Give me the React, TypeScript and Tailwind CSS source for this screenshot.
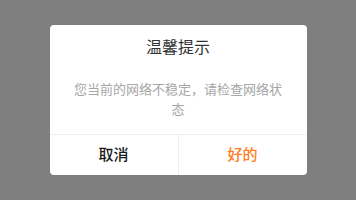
import React from 'react';

const App: React.FC = () => {
  return (
    <div
      className="w-[356px] h-[200px] bg-[#7f7f7f] flex items-center justify-center"
      style={{ fontFamily: '"Noto Sans CJK SC", "Noto Sans", sans-serif' }}
    >
      <div className="w-[257px] bg-white rounded-[4px] overflow-hidden flex flex-col">
        {/* Body */}
        <div className="px-5 pt-[9px] pb-[15px] text-center">
          <h2 className="text-[16px] leading-[24px] text-[#333]">温馨提示</h2>
          <p className="mt-[21px] text-[13px] leading-[20px] text-[#a6a6a6]">
            您当前的网络不稳定，请检查网络状态
          </p>
        </div>

        {/* Actions */}
        <div className="flex border-t border-[#eee] h-[41px]">
          <button className="flex-1 pb-[2px] text-[15px] font-medium text-[#1a1a1a] border-r border-[#eee]">取消</button>
          <button className="flex-1 pb-[2px] text-[15px] font-medium text-[#ff7d1f]">好的</button>
        </div>
      </div>
    </div>
  );
};

export default App;
